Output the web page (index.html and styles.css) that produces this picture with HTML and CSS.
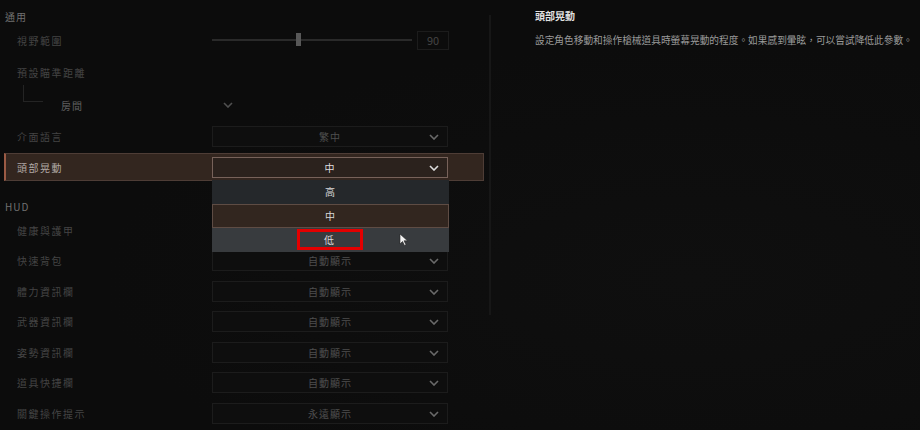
FILE: index.html
```html
<!DOCTYPE html>
<html lang="zh-Hant">
<head>
    <meta charset="UTF-8">
    <title>設定</title>
    <link rel="stylesheet" href="styles.css">
</head>
<body>
    <div class="screen">
        <div class="settings">
            <div class="section-title first">通用</div>

            <div class="row">
                <span class="label">視野範圍</span>
                <div class="slider">
                    <div class="track"><div class="thumb"></div></div>
                    <div class="slider-value">90</div>
                </div>
            </div>

            <div class="row">
                <span class="label">預設瞄準距離</span>
            </div>

            <div class="row sub-row">
                <span class="tree"></span>
                <span class="sub-label">房間</span>
                <svg class="chev loose" width="10" height="6" viewBox="0 0 10 6"><polyline points="1,1 5,5 9,1" /></svg>
            </div>

            <div class="row">
                <span class="label">介面語言</span>
                <div class="select"><span>繁中</span><svg class="chev" width="10" height="6" viewBox="0 0 10 6"><polyline points="1,1 5,5 9,1" /></svg></div>
            </div>

            <div class="row active">
                <span class="label">頭部晃動</span>
                <div class="select open">
                    <span>中</span>
                    <svg class="chev" width="10" height="6" viewBox="0 0 10 6"><polyline points="1,1 5,5 9,1" /></svg>
                    <!-- open dropdown -->
                    <div class="menu">
                        <div class="option">高</div>
                        <div class="option current">中</div>
                        <div class="option hover">
                            <span class="mark">低</span>
                            <svg class="cursor" width="10" height="13" viewBox="0 0 10 13"><path d="M1 1 L1 11 L3.5 8.5 L5.5 12.5 L7 11.8 L5 7.8 L8.5 7.8 Z" /></svg>
                        </div>
                    </div>
                </div>
            </div>

            <div class="section-title">HUD</div>

            <div class="row hud">
                <span class="label">健康與護甲</span>
            </div>
            <div class="row hud">
                <span class="label">快速背包</span>
                <div class="select"><span>自動顯示</span><svg class="chev" width="10" height="6" viewBox="0 0 10 6"><polyline points="1,1 5,5 9,1" /></svg></div>
            </div>
            <div class="row hud">
                <span class="label">體力資訊欄</span>
                <div class="select"><span>自動顯示</span><svg class="chev" width="10" height="6" viewBox="0 0 10 6"><polyline points="1,1 5,5 9,1" /></svg></div>
            </div>
            <div class="row hud">
                <span class="label">武器資訊欄</span>
                <div class="select"><span>自動顯示</span><svg class="chev" width="10" height="6" viewBox="0 0 10 6"><polyline points="1,1 5,5 9,1" /></svg></div>
            </div>
            <div class="row hud">
                <span class="label">姿勢資訊欄</span>
                <div class="select"><span>自動顯示</span><svg class="chev" width="10" height="6" viewBox="0 0 10 6"><polyline points="1,1 5,5 9,1" /></svg></div>
            </div>
            <div class="row hud">
                <span class="label">道具快捷欄</span>
                <div class="select"><span>自動顯示</span><svg class="chev" width="10" height="6" viewBox="0 0 10 6"><polyline points="1,1 5,5 9,1" /></svg></div>
            </div>
            <div class="row hud">
                <span class="label">關鍵操作提示</span>
                <div class="select"><span>永遠顯示</span><svg class="chev" width="10" height="6" viewBox="0 0 10 6"><polyline points="1,1 5,5 9,1" /></svg></div>
            </div>
        </div>

        <div class="scrollbar"></div>

        <div class="info">
            <div class="info-title">頭部晃動</div>
            <p class="info-text">設定角色移動和操作槍械道具時螢幕晃動的程度。如果感到暈眩，可以嘗試降低此參數。</p>
        </div>
    </div>
</body>
</html>
```

FILE: styles.css
```css
body {
    margin: 0;
    background-color: #0c0c0c;
    font-family: "Noto Sans CJK TC", "Noto Sans", sans-serif;
    font-size: 10px;
    color: #555;
    overflow: hidden;
}
.screen {
    display: flex;
    width: 920px;
    height: 430px;
    background: radial-gradient(ellipse at 75% 65%, #0f0f0f 0%, #0c0c0c 60%);
}
.settings {
    width: 486px;
    flex-shrink: 0;
}
.section-title {
    padding-left: 5px;
    height: 14px;
    line-height: 14px;
    color: #707070;
    margin-top: 19px;
    margin-bottom: 1px;
    letter-spacing: 1px;
}
.section-title.first {
    margin-top: 10px;
    margin-bottom: 0;
}
.row {
    position: relative;
    display: flex;
    align-items: center;
    height: 32px;
    padding-left: 17px;
}
.row.hud {
    height: 30.5px;
}
.label {
    width: 195px;
    flex-shrink: 0;
    color: #444;
    letter-spacing: 1.5px;
}

/* slider */
.slider {
    display: flex;
    align-items: center;
}
.track {
    position: relative;
    width: 200px;
    height: 2px;
    background: #2a2a2a;
}
.thumb {
    position: absolute;
    left: 84px;
    top: -6px;
    width: 5px;
    height: 13px;
    background: #585858;
}
.slider-value {
    margin-left: 5px;
    width: 30px;
    height: 17px;
    line-height: 17px;
    border: 1px solid #1c1c1c;
    text-align: center;
    color: #444;
    font-size: 11px;
}

/* tree sub row */
.sub-row {
    padding-left: 23px;
}
.tree {
    align-self: flex-start;
    width: 19px;
    height: 16px;
    border-left: 1px solid #242424;
    border-bottom: 1px solid #242424;
    margin-top: -3px;
}
.sub-label {
    margin-left: 18px;
    width: 162px;
    color: #606060;
    letter-spacing: 1px;
    margin-top: 2px;
}
.chev {
    fill: none;
    stroke: #6a6a6a;
    stroke-width: 1.6;
}
.chev.loose {
    stroke: #505050;
    margin-top: 2px;
}

/* dropdowns */
.select {
    position: relative;
    width: 234px;
    height: 19px;
    border: 1px solid #1c1c1c;
    background: #0e0e0e;
    display: flex;
    align-items: center;
    justify-content: center;
    color: #4e4e4e;
    letter-spacing: 1px;
}
.select .chev {
    position: absolute;
    right: 8px;
    top: 7px;
}
.row.active {
    height: 26px;
    margin: 1px 0 0 4px;
    padding-left: 11px;
    width: 466px;
    background: #33261f;
    border: 1px solid #4e3d36;
    border-left: 2px solid #9a5a44;
}
.row.active .label {
    color: #b0a8a4;
}
.row.active .select {
    background: #2b221d;
    border-color: #77625a;
    color: #ddd;
}
.row.active .select .chev {
    stroke: #ddd;
}

/* open menu */
.menu {
    position: absolute;
    left: -1px;
    top: 22px;
    width: 237px;
    z-index: 2;
}
.option {
    position: relative;
    height: 24px;
    display: flex;
    align-items: center;
    justify-content: center;
    background: #25282b;
    color: #d8d8d8;
    box-sizing: border-box;
}
.option.current {
    background: #32261f;
    border: 1px solid #5e4c44;
}
.option.hover {
    background: #383b3e;
}
.mark {
    width: 60px;
    height: 15px;
    line-height: 15px;
    text-align: center;
    border: 3px solid #e40000;
    margin-left: -2px;
}
.cursor {
    position: absolute;
    left: 187px;
    top: 5px;
    fill: #f2f2f2;
    stroke: #222;
    stroke-width: 0.6;
}

/* scrollbar */
.scrollbar {
    width: 2px;
    height: 300px;
    margin: 15px 0 0 3px;
    background: #171717;
}

/* description panel */
.info {
    padding-left: 44px;
    padding-top: 9px;
}
.info-title {
    color: #e2e2e2;
    font-weight: bold;
    font-size: 10px;
    line-height: 14px;
}
.info-text {
    margin: 10px 0 0;
    color: #9a9a9a;
    font-size: 9.7px;
    line-height: 14px;
    white-space: nowrap;
}
```
